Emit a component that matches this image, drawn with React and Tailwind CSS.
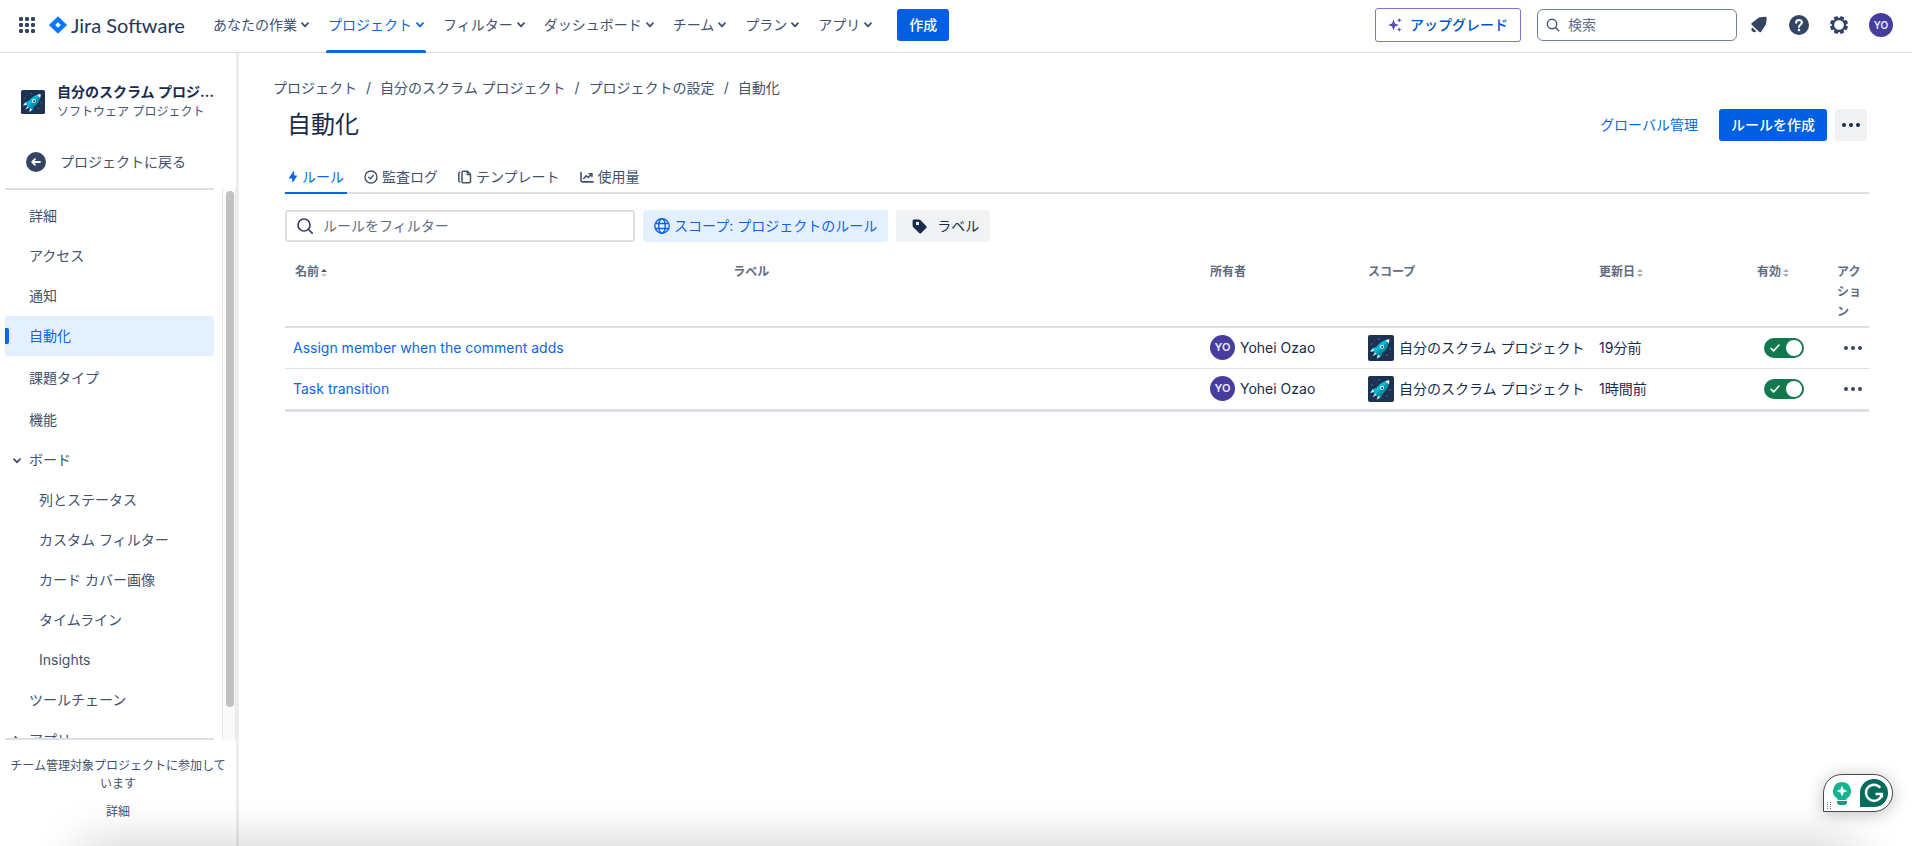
import React from "react";

const NAV = [
  { label: "あなたの作業" },
  { label: "プロジェクト", active: true },
  { label: "フィルター" },
  { label: "ダッシュボード" },
  { label: "チーム" },
  { label: "プラン" },
  { label: "アプリ" },
];

const SIDE = [
  { label: "詳細" },
  { label: "アクセス" },
  { label: "通知" },
  { label: "自動化", active: true },
  { label: "課題タイプ", spaced: true },
  { label: "機能", spaced: true },
  { label: "ボード", open: true },
  { label: "列とステータス", child: true },
  { label: "カスタム フィルター", child: true },
  { label: "カード カバー画像", child: true },
  { label: "タイムライン", child: true },
  { label: "Insights", child: true },
  { label: "ツールチェーン" },
  { label: "アプリ", closed: true },
];

const TABS = [
  { label: "ルール", icon: BoltIcon, active: true },
  { label: "監査ログ", icon: AuditIcon },
  { label: "テンプレート", icon: TemplateIcon },
  { label: "使用量", icon: UsageIcon },
];

const RULES = [
  { name: "Assign member when the comment adds", updated: "19分前" },
  { name: "Task transition", updated: "1時間前" },
];

function Chevron({ className = "" }) {
  return (
    <svg viewBox="0 0 8 6" className={"h-[6px] w-2 shrink-0 " + className} fill="none" stroke="currentColor" strokeWidth="1.800" strokeLinecap="round" strokeLinejoin="round" aria-hidden="true">
      <path d="M1 1.2 4 4.4 7 1.2" />
    </svg>
  );
}

function BoltIcon() {
  return (
    <svg viewBox="0 0 10 14" className="h-3.5 w-2.5" fill="currentColor" aria-hidden="true">
      <path d="M6.200 1.900v3.500h2.200c.6 0 .8.5.5.9L5.200 11.900c-.4.500-1 .4-1-.2V8.600H1.700c-.6 0-.8-.5-.5-1L5.200 1.700c.4-.6 1-.4 1 .2Z" />
    </svg>
  );
}

function AuditIcon() {
  return (
    <svg viewBox="0 0 14 14" className="h-3.5 w-3.5" fill="none" stroke="currentColor" strokeWidth="1.4" strokeLinecap="round" strokeLinejoin="round" aria-hidden="true">
      <circle cx="7" cy="7" r="6" />
      <path d="m4.700 7.300 1.600 1.500 3-3.200" />
    </svg>
  );
}

function TemplateIcon() {
  return (
    <svg viewBox="0 0 14 14" className="h-3.5 w-3.5" fill="none" stroke="currentColor" strokeWidth="1.500" strokeLinecap="round" strokeLinejoin="round" aria-hidden="true">
      <path d="M1.700 2.200c-.6.200-.9.600-.9 1.300v7c0 .7.300 1.200.9 1.400" />
      <path d="M5.200 1.200h4.300l3 3v7.300c0 .7-.5 1.200-1.200 1.200H5.200c-.7 0-1.200-.5-1.200-1.200V2.400c0-.7.5-1.200 1.200-1.200Z" />
      <path d="M9.300 1.400v3h3" />
    </svg>
  );
}

function UsageIcon() {
  return (
    <svg viewBox="0 0 14 14" className="h-3.5 w-3.5" fill="none" stroke="currentColor" strokeWidth="1.600" strokeLinecap="round" strokeLinejoin="round" aria-hidden="true">
      <path d="M1 2.500v8c0 .9.500 1.400 1.400 1.400H13" />
      <path d="m3.800 8.600 2.400-2.800 2 1.700 3.400-3.400" />
      <path d="M9 3.800h2.900v2.600" />
    </svg>
  );
}

function Rocket({ className }) {
  return (
    <svg viewBox="0 0 26 26" className={className} aria-hidden="true">
      <rect width="26" height="26" rx="2" fill="#1d3150" />
      <g fill="#3a4d6c">
        <rect x="10" y="3" width="2" height="2" />
        <rect x="3" y="8" width="2" height="2" />
        <rect x="21" y="13" width="2" height="2" />
        <rect x="18" y="19" width="2" height="2" />
        <rect x="6" y="5" width="1" height="1" />
        <rect x="14" y="22" width="1" height="1" />
        <rect x="22" y="17" width="1" height="1" />
      </g>
      <path d="M17.500 5.300c-3.500.8-6.800 3.400-8.900 6.700L6 17.300l3 3 5.400-2.600c3.300-2.300 5.700-5.700 6.300-9.200Z" fill="#0095ad" />
      <path d="M17.500 5.300c-3.500.8-6.800 3.400-8.900 6.700L6 17.300l1.500 1.500L19.200 6.900Z" fill="#00b8d9" />
      <path d="m9.200 11.400-5 2.200-1.700 3.200 4-.7Z" fill="#00c7e6" />
      <path d="m14.900 16.900-2 4.900-3.200 1.700.7-4Z" fill="#008da6" />
      <path d="m4.700 13.600-2.500 3.200 4.100-.8ZM7 17.500l-2.500 3.700 4-2.100ZM10 19.500l-1.300 4.300 3.500-2.500Z" fill="#e9edf3" />
      <path d="M21.300 4.200c-1.500 0-2.800.4-3.900 1.100l3.300 3.300c.6-1.400.8-2.900.6-4.400Z" fill="#f1f4f8" />
      <circle cx="14" cy="11.800" r="2" fill="#fff" />
      <circle cx="14.200" cy="12" r="1.100" fill="#1d3150" />
    </svg>
  );
}

function Dots({ className = "" }) {
  return (
    <svg viewBox="0 0 18 4" className={"h-1 w-[18px] " + className} fill="currentColor" aria-hidden="true">
      <circle cx="2" cy="2" r="2" />
      <circle cx="9" cy="2" r="2" />
      <circle cx="16" cy="2" r="2" />
    </svg>
  );
}

function Sort({ up }) {
  return (
    <svg viewBox="0 0 6 8" className="mt-0.5 h-2 w-1.5" aria-hidden="true">
      <path d="M0 3 3 0l3 3Z" fill={up ? "#44546f" : "#a5adba"} />
      <path d="M0 5h6L3 8Z" fill={up ? "#c1c7d0" : "#a5adba"} />
    </svg>
  );
}

function Avatar({ className }) {
  return (
    <span className={"flex shrink-0 items-center justify-center rounded-full bg-[#473d9e] font-semibold text-white/90 " + className}>YO</span>
  );
}

function Header() {
  return (
    <header className="flex h-[53px] shrink-0 items-center border-b border-[#dcdfe4] pr-[19px] pb-0.5 pl-[19px]">
      <button type="button" aria-label="アプリスイッチャー" className="text-[#344563]">
        <svg viewBox="0 0 16 16" className="h-4 w-4" fill="currentColor">
          {[0, 6, 12].map((y) => [0, 6, 12].map((x) => <rect key={x + "-" + y} x={x} y={y} width="4" height="4" rx="1.300" />))}
        </svg>
      </button>
      <a href="#home" className="ml-3.5 flex items-center gap-1">
        <svg viewBox="0 0 18 18" className="h-[18px] w-[18px]" aria-hidden="true">
          <defs>
            <linearGradient id="jira-fade" x1="0" y1="0" x2="1" y2="1">
              <stop offset="0" stopColor="#2684ff" />
              <stop offset="0.500" stopColor="#0073ff" />
              <stop offset="1" stopColor="#2684ff" />
            </linearGradient>
          </defs>
          <path d="M9 .2 17.600 8.400a.8.8 0 0 1 0 1.200L9 17.800.4 9.600a.8.8 0 0 1 0-1.200ZM9 6.200 6.200 9 9 11.800 11.800 9Z" fill="url(#jira-fade)" fillRule="evenodd" />
        </svg>
        <span className="w-[114px] font-[Lato] text-xl leading-6 whitespace-nowrap text-[#253858]">Jira Software</span>
      </a>
      <nav className="ml-[26px] flex h-full items-center gap-[15px]">
        {NAV.map((n) => (
          <div key={n.label} className={"relative flex h-full items-center px-0.5 " + (n.active ? "text-[#0c66e4]" : "text-[#42526e]")}>
            <button type="button" className="flex items-center gap-1 whitespace-nowrap">
              {n.label}
              <Chevron />
            </button>
            {n.active && <span className="absolute inset-x-0 -bottom-[3px] h-[3px] rounded-t-xs bg-[#0c66e4]" />}
          </div>
        ))}
      </nav>
      <button type="button" className="ml-[23px] h-8 rounded-[3px] bg-[#005fe0] px-3 font-medium text-white">作成</button>
      <div className="ml-auto flex items-center">
        <button type="button" className="flex h-[34px] items-center gap-2 rounded-[3px] border border-[#8270db] px-3 font-medium whitespace-nowrap text-[#0055cc]">
          <svg viewBox="0 0 14 14" className="h-3.5 w-3.5" fill="#5e4db2" aria-hidden="true">
            <path d="M5.500 1.600 7 5.500 10.900 7 7 8.500 5.500 12.400 4 8.500.1 7 4 5.500ZM11.300 0l.7 1.600 1.700.7-1.700.7-.7 1.600-.7-1.600-1.700-.7 1.700-.7ZM11.300 9.300l.7 1.600 1.700.7-1.700.7-.7 1.600-.7-1.600-1.700-.7 1.700-.7Z" />
          </svg>
          アップグレード
        </button>
        <label className="ml-4 flex h-8 w-[200px] items-center gap-2 rounded-md border border-[#758195] px-2">
          <svg viewBox="0 0 14 14" className="h-3.5 w-3.5 shrink-0" fill="none" stroke="#44546f" strokeWidth="1.400" strokeLinecap="round" aria-hidden="true">
            <circle cx="6" cy="6" r="4.700" />
            <path d="m9.500 9.500 3.300 3.300" />
          </svg>
          <input type="search" aria-label="検索" placeholder="検索" className="w-full min-w-0 bg-transparent outline-none placeholder:text-[#626f86]" />
        </label>
        <button type="button" aria-label="お知らせ" className="ml-[13px] text-[#344563]">
          <svg viewBox="0 0 18 18" className="h-[18px] w-[18px]" fill="currentColor">
            <path d="M10.200 1.300 15.300.8c.8-.1 1.500.6 1.400 1.400l-.5 4.900c-.1.700-.3 1.300-.7 1.900L11 15.900c-.4.600-1.100.6-1.600.1L1.700 8.700c-.5-.5-.5-1.200.1-1.600l6.500-5.200c.6-.4 1.200-.6 1.900-.6Z" />
            <path d="M2.300 11.500 6.200 15.300A2.700 2.700 0 0 1 2.300 11.500Z" />
          </svg>
        </button>
        <button type="button" aria-label="ヘルプ" className="ml-[21px] text-[#344563]">
          <svg viewBox="0 0 20 20" className="h-5 w-5">
            <circle cx="10" cy="10" r="10" fill="currentColor" />
            <path d="M7.100 7.700C7.100 6 8.400 4.900 10 4.900s2.900 1.100 2.900 2.700c0 2-2.900 2.200-2.900 4.300" fill="none" stroke="#fff" strokeWidth="2" strokeLinecap="round" />
            <circle cx="10" cy="15" r="1.300" fill="#fff" />
          </svg>
        </button>
        <button type="button" aria-label="設定" className="ml-[21px] text-[#344563]">
          <svg viewBox="0 0 18 18" className="h-[18px] w-[18px]">
            <circle cx="9" cy="9" r="6" fill="none" stroke="currentColor" strokeWidth="2.300" />
            {[0, 45, 90, 135, 180, 225, 270, 315].map((a) => (
              <rect key={a} x="6.900" y="0" width="4.200" height="3" rx="1" fill="currentColor" transform={`rotate(${a + 22.5} 9 9)`} />
            ))}
          </svg>
        </button>
        <button type="button" aria-label="プロフィール" className="ml-[21px]">
          <Avatar className="h-6 w-6 text-[10px]" />
        </button>
      </div>
    </header>
  );
}

function Sidebar() {
  return (
    <aside className="flex w-[239px] shrink-0 flex-col border-r-[3px] border-[#ebecf0]">
      <div className="mt-[29px] flex items-center gap-3 pr-5 pl-[21px]">
        <Rocket className="h-6 w-6 shrink-0" />
        <div className="min-w-0">
          <div className="truncate leading-5 font-bold text-[#172b4d]">自分のスクラム プロジェクト</div>
          <div className="truncate text-xs leading-5 text-[#44546f]">ソフトウェア プロジェクト</div>
        </div>
      </div>
      <a href="#back" className="mt-5 flex h-10 items-center gap-3.5 pl-[26px]">
        <svg viewBox="0 0 20 20" className="h-5 w-5" aria-hidden="true">
          <circle cx="10" cy="10" r="10" fill="#344563" />
          <path d="M14 10H6.500M9 7.200 6.200 10 9 12.800" fill="none" stroke="#fff" strokeWidth="1.800" strokeLinecap="round" strokeLinejoin="round" />
        </svg>
        プロジェクトに戻る
      </a>
      <div className="mt-1.5 flex min-h-0 flex-1">
        <div className="flex min-w-0 flex-1 flex-col pr-2 pl-[5px]">
          <div className="h-0.5 shrink-0 bg-[#dcdfe4]" />
          <nav className="min-h-0 flex-1 overflow-hidden pt-1.5">
            {SIDE.map((s, i) => (
              <a
                key={i}
                href={"#nav-" + i}
                className={
                  "flex h-10 items-center rounded-[3px] " +
                  (s.active ? "bg-[#e4f0ff] text-[#0c66e4] " : "") +
                  (s.spaced ? "mt-0.5 " : "") +
                  (s.child ? "pl-[34px]" : "")
                }
              >
                {!s.child && (
                  <span className="flex w-6 shrink-0 items-center">
                    {s.active && <span className="h-4 w-1 rounded-r-xs bg-[#0c66e4]" />}
                    {s.open && <Chevron className="mt-0.5 ml-2" />}
                    {s.closed && <Chevron className="ml-2 -rotate-90" />}
                  </span>
                )}
                <span>{s.label}</span>
              </a>
            ))}
          </nav>
          <div className="h-0.5 shrink-0 bg-[#dcdfe4]" />
        </div>
        <div className="w-[14px] shrink-0 border-x border-[#e8e8e8] bg-[#fafafa] pt-[3px] pl-[3px]">
          <div className="h-[94%] w-2 rounded-full bg-[#c1c1c1]" />
        </div>
      </div>
      <div className="flex h-[106px] shrink-0 flex-col items-center gap-2.5 px-1.5 pt-[17px] text-center text-xs leading-[18px]">
        <p>チーム管理対象プロジェクトに参加しています</p>
        <a href="#details">詳細</a>
      </div>
    </aside>
  );
}

function Toggle({ label }) {
  return (
    <label className="inline-flex cursor-pointer align-middle">
      <input type="checkbox" defaultChecked aria-label={label} className="peer sr-only" />
      <span className="flex h-5 w-10 items-center justify-between rounded-full bg-[#12794e] pr-0.5 pl-1.5">
        <svg viewBox="0 0 10 8" className="h-2 w-2.5" fill="none" stroke="#fff" strokeWidth="1.600" strokeLinecap="round" strokeLinejoin="round" aria-hidden="true">
          <path d="M1 4.300 3.600 6.900 9 1" />
        </svg>
        <span className="h-4 w-4 rounded-full bg-white" />
      </span>
    </label>
  );
}

function RulesTable() {
  return (
    <table className="mt-2 w-full table-fixed border-b-[3px] border-[#dcdfe4] text-[#172b4d]">
      <colgroup>
        <col className="w-[27.800%]" />
        <col />
        <col className="w-[158px]" />
        <col className="w-[231px]" />
        <col className="w-[158px]" />
        <col className="w-20" />
        <col className="w-8" />
      </colgroup>
      <thead className="border-b-2 border-[#dcdfe4] text-left align-top text-xs leading-5 text-[#5e6c84]">
        <tr className="h-[77px]">
          <th className="pt-3 pl-[10px]">
            <button type="button" className="flex items-center gap-0.5 font-bold">名前<Sort up /></button>
          </th>
          <th className="pt-3 pl-2">ラベル</th>
          <th className="pt-3">所有者</th>
          <th className="pt-3">スコープ</th>
          <th className="pt-3">
            <button type="button" className="flex items-center gap-0.5 font-bold">更新日<Sort /></button>
          </th>
          <th className="pt-3">
            <button type="button" className="flex items-center gap-0.5 font-bold">有効<Sort /></button>
          </th>
          <th className="pt-3 pr-1 break-all">アクション</th>
        </tr>
      </thead>
      <tbody>
        {RULES.map((r) => (
          <tr key={r.name} className="h-[41px] border-t border-[#dcdfe4] whitespace-nowrap first:border-t-0 last:h-[42px]">
            <td className="pl-2">
              <a href="#rule" className="text-[#0c66e4]">{r.name}</a>
            </td>
            <td />
            <td>
              <span className="flex items-center gap-[5px]">
                <Avatar className="h-[25px] w-[25px] text-[11px]" />
                Yohei Ozao
              </span>
            </td>
            <td>
              <span className="flex items-center gap-[5px]">
                <Rocket className="h-[26px] w-[26px] shrink-0" />
                自分のスクラム プロジェクト
              </span>
            </td>
            <td>{r.updated}</td>
            <td className="pl-[7px]">
              <Toggle label={r.name} />
            </td>
            <td className="pl-[7px] text-[#344563]">
              <button type="button" aria-label="アクション" className="flex items-center">
                <Dots />
              </button>
            </td>
          </tr>
        ))}
      </tbody>
    </table>
  );
}

function Assistant() {
  return (
    <div className="absolute right-[19px] bottom-[34px] flex h-[38px] w-[70px] items-center gap-2 rounded-l-[19px] rounded-r-[19px] rounded-bl-none border border-[#4a4a4a] bg-white pl-2 shadow-[0_2px_16px_rgba(0,0,0,0.25)]">
      <svg viewBox="0 0 20 24" className="h-6 w-5" aria-hidden="true">
        <path d="M10 1a9 9 0 0 0-5.200 16.300c.6.400 1 .9 1.200 1.700h8c.2-.8.6-1.300 1.200-1.700A9 9 0 0 0 10 1Z" fill="#15b38f" />
        <path d="M10 4.500 11.600 8.400 15.500 10l-3.900 1.600L10 15.500l-1.600-3.900L4.500 10l3.900-1.600Z" fill="#fff" />
        <path d="M5 20h10v1a3 3 0 0 1-3 3H8a3 3 0 0 1-3-3Z" fill="#0f9b7c" />
      </svg>
      <svg viewBox="0 0 28 28" className="h-7 w-7" aria-hidden="true">
        <path d="M14 0a14 14 0 0 1 0 28H0V14A14 14 0 0 1 14 0Z" fill="#046a5a" />
        <path d="M20.300 8.800A8 8 0 1 0 21.900 15H15.500M21.900 14v4.500" fill="none" stroke="#fff" strokeWidth="2.400" />
      </svg>
      <svg viewBox="0 0 4 7" className="absolute bottom-0.5 left-[3px] h-[7px] w-1" fill="#777" aria-hidden="true">
        {[0, 2, 4, 6].map((y) => [0, 3].map((x) => <rect key={x + "-" + y} x={x} y={y} width="1" height="1" />))}
      </svg>
    </div>
  );
}

export default function App() {
  return (
    <div className="relative flex h-screen flex-col overflow-hidden bg-white font-[Inter,'Noto_Sans_CJK_JP',sans-serif] text-sm text-[#42526e]">
      <Header />
      <div className="flex min-h-0 flex-1">
        <Sidebar />
        <main className="min-w-0 flex-1 pt-[25px] pr-[43px] pl-[34px]">
          <ol className="flex gap-[9px] leading-5">
            <li><a href="#projects">プロジェクト</a></li>
            <li aria-hidden="true">/</li>
            <li><a href="#project">自分のスクラム プロジェクト</a></li>
            <li aria-hidden="true">/</li>
            <li><a href="#settings">プロジェクトの設定</a></li>
            <li aria-hidden="true">/</li>
            <li><a href="#automation">自動化</a></li>
          </ol>
          <div className="pl-3">
            <div className="mt-[11px] flex h-8 items-center pr-0.5">
              <h1 className="pl-0.5 text-2xl text-[#172b4d]">自動化</h1>
              <a href="#global" className="ml-auto text-[#0c66e4]">グローバル管理</a>
              <button type="button" className="ml-[21px] h-8 rounded-[3px] bg-[#005fe0] px-3 font-medium text-white">ルールを作成</button>
              <button type="button" aria-label="その他" className="ml-2 flex h-8 w-8 items-center justify-center rounded-[3px] bg-[#f1f2f4] text-[#172b4d]">
                <Dots />
              </button>
            </div>
            <div role="tablist" className="mt-[21px] flex h-8 gap-3.5 border-b-2 border-[#dcdfe4]">
              {TABS.map((t) => (
                <button
                  key={t.label}
                  type="button"
                  role="tab"
                  aria-selected={!!t.active}
                  className={"-mb-0.5 flex items-center gap-1 border-b-2 px-[3px] " + (t.active ? "border-[#0c66e4] text-[#0c66e4]" : "border-transparent")}
                >
                  <t.icon />
                  {t.label}
                </button>
              ))}
            </div>
            <div className="mt-4 flex h-8 gap-2">
              <label className="flex w-[350px] items-center gap-2.5 rounded-[3px] border-2 border-[#dcdfe4] px-2.5">
                <svg viewBox="0 0 16 16" className="h-4 w-4 shrink-0" fill="none" stroke="#344563" strokeWidth="1.700" strokeLinecap="round" aria-hidden="true">
                  <circle cx="7" cy="7" r="6" />
                  <path d="m11.500 11.500 3.700 3.700" />
                </svg>
                <input type="text" aria-label="ルールをフィルター" placeholder="ルールをフィルター" className="w-full min-w-0 bg-transparent outline-none placeholder:text-[#5e6c84]" />
              </label>
              <button type="button" className="flex items-center gap-1 rounded-[3px] bg-[#e4f0ff] px-[11px] whitespace-nowrap text-[#0c66e4]">
                <svg viewBox="0 0 16 16" className="h-4 w-4" fill="none" stroke="currentColor" strokeWidth="1.400" aria-hidden="true">
                  <circle cx="8" cy="8" r="7.200" />
                  <ellipse cx="8" cy="8" rx="3.300" ry="7.200" />
                  <path d="M1.500 5.500h13M1.500 10.500h13" />
                </svg>
                スコープ: プロジェクトのルール
              </button>
              <button type="button" className="flex items-center gap-2.5 rounded-[3px] bg-[#f1f2f4] pr-[11px] pl-4 whitespace-nowrap text-[#172b4d]">
                <svg viewBox="0 0 15 15" className="h-[15px] w-[15px]" fill="currentColor" aria-hidden="true">
                  <path fillRule="evenodd" d="M2 .5h4.800c.6 0 1.100.2 1.500.6l5.900 5.900c.7.700.7 1.300 0 2l-5 5c-.7.700-1.400.7-2 0L1.200 8.200a2 2 0 0 1-.6-1.500V2C.6 1.100 1.100.5 2 .5ZM4 3v3h3V3Z" />
                </svg>
                ラベル
              </button>
            </div>
            <RulesTable />
          </div>
        </main>
      </div>
      <div className="pointer-events-none absolute top-full right-14 left-20 h-10 shadow-[0_0_48px_rgba(0,0,0,0.22)]" />
      <Assistant />
    </div>
  );
}
